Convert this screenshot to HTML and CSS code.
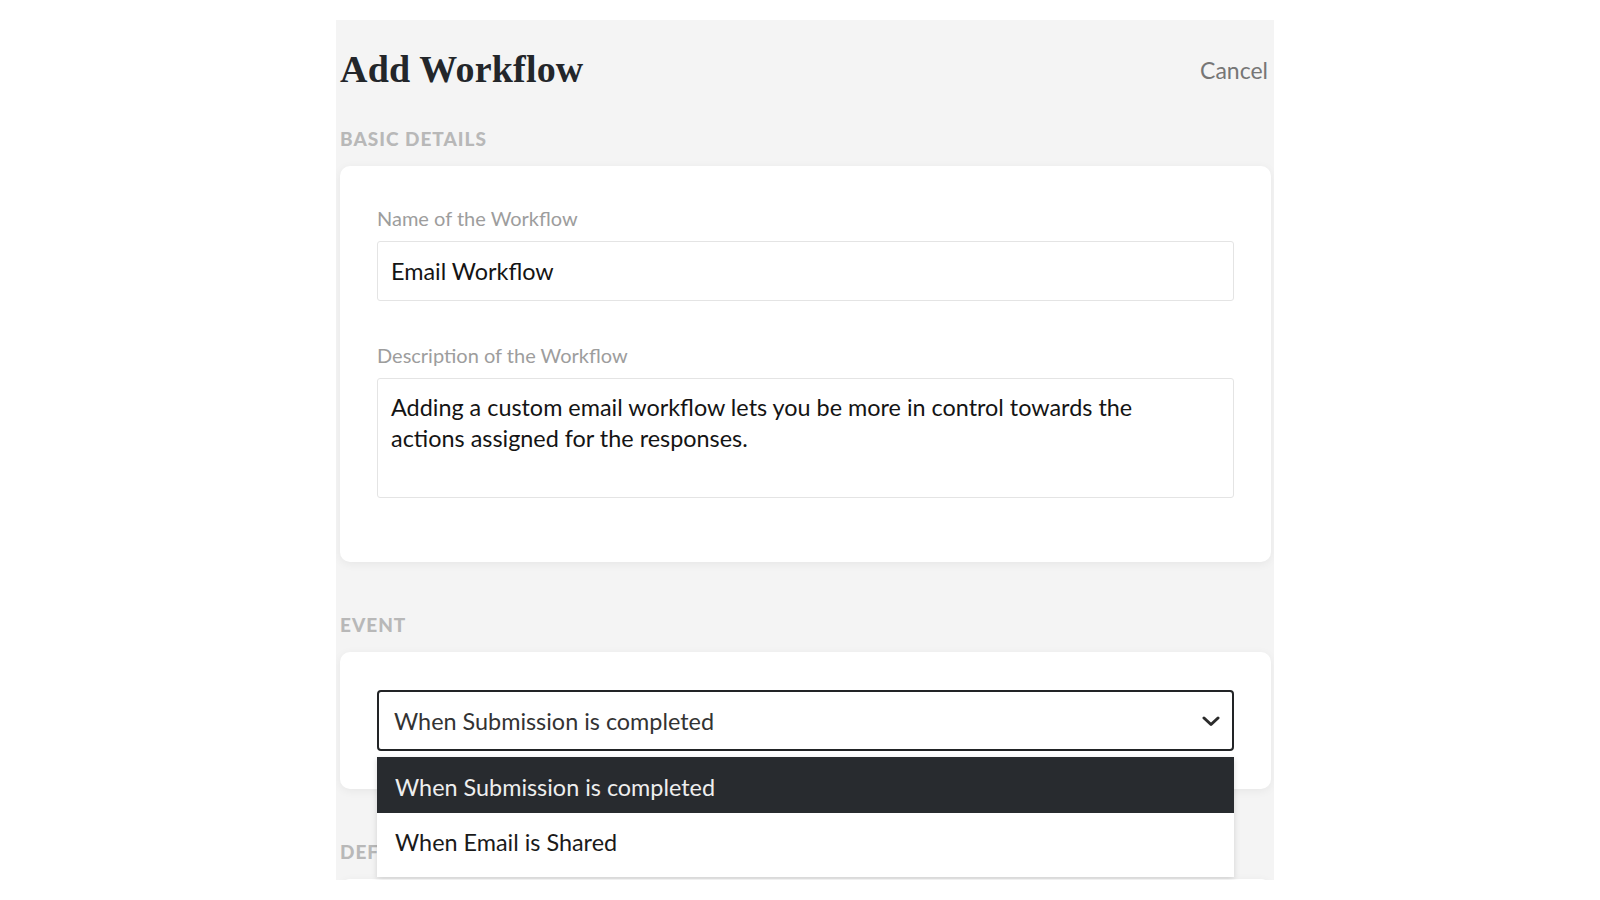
FILE: index.html
```html
<!DOCTYPE html>
<html lang="en">
<head>
<meta charset="utf-8">
<title>Add Workflow</title>
<link rel="stylesheet" href="styles.css">
</head>
<body>
<div class="page">
  <div class="panel">
    <header class="header">
      <h1 class="title">Add Workflow</h1>
      <a class="cancel">Cancel</a>
    </header>

    <div class="section-label first">BASIC DETAILS</div>
    <div class="card card-basic">
      <div class="field-label">Name of the Workflow</div>
      <div class="input">Email Workflow</div>
      <div class="field-label second">Description of the Workflow</div>
      <div class="textarea">Adding a custom email workflow lets you be more in control towards the<br>actions assigned for the responses.</div>
    </div>

    <div class="section-label">EVENT</div>
    <div class="card card-event">
      <div class="select-wrap">
        <div class="select">
          <span class="select-text">When Submission is completed</span>
          <svg class="chevron" width="18" height="11" viewBox="0 0 18 11"><polyline points="2,2 9,8.5 16,2" fill="none" stroke="#2b2b2b" stroke-width="3" stroke-linecap="round" stroke-linejoin="round"/></svg>
        </div>
        <ul class="menu">
          <li class="option active">When Submission is completed</li>
          <li class="option">When Email is Shared</li>
        </ul>
      </div>
    </div>

    <div class="section-label def">DEFAULT</div>
    <div class="card card-next"></div>
  </div>
</div>
</body>
</html>
```

FILE: styles.css
```css
* { box-sizing: border-box; }
html, body { margin: 0; padding: 0; background: #ffffff; }
body { font-family: Lato, "Noto Sans", sans-serif; color: #1c1c1c; }

.page {
  width: 1600px;
  height: 900px;
  padding-top: 20px;
  padding-left: 336px;
}

.panel {
  width: 938px;
  height: 860px;
  background: #f4f4f4;
  padding: 0 3px 0 4px;
  overflow: hidden;
}

.header {
  display: flex;
  justify-content: space-between;
  align-items: flex-start;
  padding-top: 27px;
}

.title {
  margin: 0;
  font-family: "Liberation Serif", "DejaVu Serif", serif;
  font-weight: 700;
  font-size: 38px;
  line-height: 44px;
  color: #23262a;
  letter-spacing: 0.2px;
}

.cancel {
  font-size: 23px;
  line-height: 28px;
  color: #767676;
  margin-top: 9px;
  margin-right: 3px;
}

.section-label {
  font-size: 19px;
  line-height: 24px;
  font-weight: 900;
  letter-spacing: 1px;
  color: #b8b8b8;
  margin-top: 51px;
  margin-bottom: 15px;
}
.section-label.first { margin-top: 36px; }
.section-label.def { margin-top: 51px; }

.card {
  background: #ffffff;
  border-radius: 10px;
  box-shadow: 0 2px 10px rgba(0, 0, 0, 0.06);
  padding: 0 37px 0 37px;
}
.card-basic { padding-top: 40px; padding-bottom: 64px; }
.card-event { padding-top: 38px; padding-bottom: 38px; }
.card-next { height: 80px; }

.field-label {
  font-size: 20px;
  line-height: 24px;
  color: #9d9d9d;
  margin-bottom: 11px;
}
.field-label.second { margin-top: 42px; }

.input {
  height: 60px;
  border: 1px solid #e4e4e4;
  border-radius: 3px;
  padding: 0 13px;
  font-size: 23.4px;
  line-height: 58px;
  color: #141414;
}

.textarea {
  height: 120px;
  border: 1px solid #e4e4e4;
  border-radius: 3px;
  padding: 13px 13px 0 13px;
  font-size: 23.4px;
  line-height: 31px;
  color: #141414;
  white-space: nowrap;
}

.select-wrap { position: relative; }

.select {
  height: 61px;
  border: 2px solid #222426;
  border-radius: 4px;
  display: flex;
  align-items: center;
  justify-content: space-between;
  padding: 0 12px 0 15px;
}
.select-text {
  font-size: 23.4px;
  color: #333333;
}
.chevron { display: block; margin-top: 2px; }

.menu {
  position: absolute;
  left: 0;
  right: 0;
  top: 67px;
  margin: 0;
  padding: 0;
  list-style: none;
  background: #ffffff;
  box-shadow: 0 2px 6px rgba(0, 0, 0, 0.14);
  z-index: 5;
}
.option {
  padding-left: 18px;
  font-size: 23.4px;
  color: #1a1a1a;
}
.option.active {
  height: 56px;
  line-height: 60px;
  background: #282b2f;
  color: #eeeeee;
}
.option:not(.active) {
  height: 64px;
  line-height: 58px;
}
```
